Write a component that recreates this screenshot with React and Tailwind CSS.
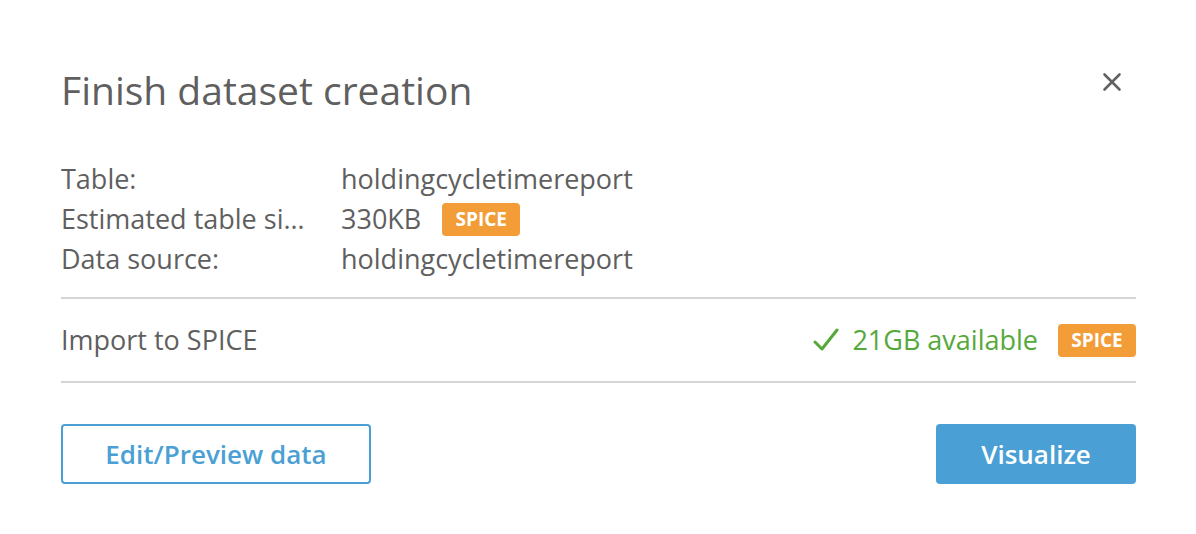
import React from 'react';

function SpiceBadge() {
  return (
    <span className="inline-flex items-center justify-center w-[78px] h-[33px] rounded-[4px] bg-[#f29d38] text-white text-[19px] font-bold">
      SPICE
    </span>
  );
}

export default function App() {
  const rows = [
    { label: 'Table:', value: 'holdingcycletimereport' },
    { label: 'Estimated table size:', value: '330KB', badge: true },
    { label: 'Data source:', value: 'holdingcycletimereport' },
  ];

  return (
    <div
      className="w-[1196px] h-[534px] bg-white text-[#5f5f5f] pl-[61px] pr-[60px]"
      style={{ fontFamily: '"Open Sans", "Noto Sans", sans-serif' }}
    >
      <div className="flex items-center justify-between pt-[66px] pb-[45px]">
        <h1 className="text-[39px] leading-[48px] text-[#5f5f5f]">Finish dataset creation</h1>
        <button className="mr-[14px] -mt-[16px] text-[#616161]" aria-label="Close">
          <svg width="20" height="20" viewBox="0 0 20 20">
            <path d="M2.5 2.5 L17.5 17.5 M17.5 2.5 L2.5 17.5" stroke="currentColor" strokeWidth="2.6" strokeLinecap="round" />
          </svg>
        </button>
      </div>

      <div className="flex flex-col pb-[18px]">
        {rows.map(row => (
          <div key={row.label} className="flex items-center h-[40px] text-[27px]">
            <span className="w-[256px] mr-[24px] truncate">{row.label}</span>
            <span className="flex items-center gap-[21px]">
              {row.value}
              {row.badge && <SpiceBadge />}
            </span>
          </div>
        ))}
      </div>

      <div className="border-t-2 border-[#d5d5d5]" />
      <div className="flex items-center justify-between h-[82px] text-[27px]">
        <span>Import to SPICE</span>
        <div className="flex items-center gap-[20px]">
          <span className="flex items-center gap-[12px] text-[#55a93a] font-medium">
            <svg width="27" height="26" viewBox="0 0 27 26">
              <path d="M2 15 L9 22 L24 3" fill="none" stroke="currentColor" strokeWidth="3" strokeLinecap="round" strokeLinejoin="round" />
            </svg>
            21GB available
          </span>
          <SpiceBadge />
        </div>
      </div>
      <div className="border-t-2 border-[#d5d5d5]" />

      <div className="flex items-center justify-between pt-[41px]">
        <button className="w-[310px] h-[60px] rounded-[4px] border-2 border-[#4a9fd4] text-[#4a9fd4] text-[26px] font-semibold">
          Edit/Preview data
        </button>
        <button className="w-[200px] h-[60px] rounded-[4px] bg-[#4a9fd4] text-white text-[26px] font-semibold">
          Visualize
        </button>
      </div>
    </div>
  );
}
